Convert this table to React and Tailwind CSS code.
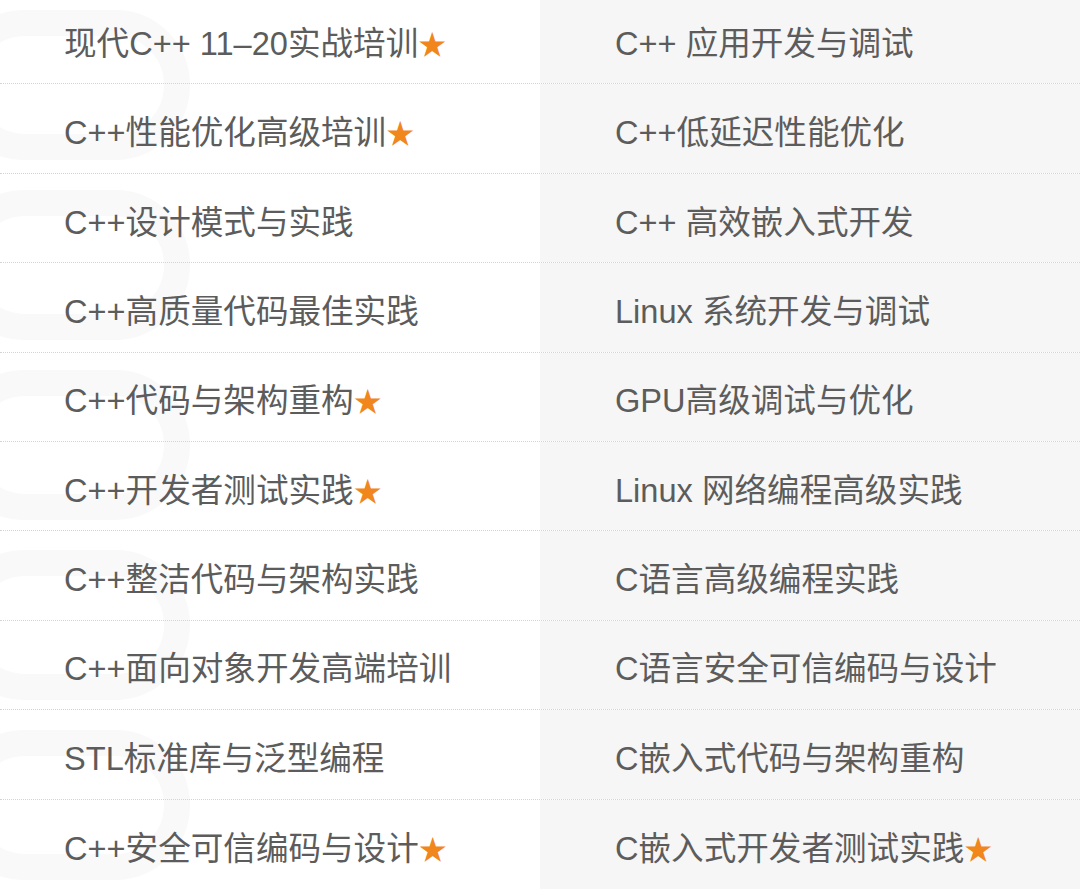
import React from 'react';

const rows = [
  ['现代C++ 11–20实战培训', true, 'C++ 应用开发与调试', false],
  ['C++性能优化高级培训', true, 'C++低延迟性能优化', false],
  ['C++设计模式与实践', false, 'C++ 高效嵌入式开发', false],
  ['C++高质量代码最佳实践', false, 'Linux 系统开发与调试', false],
  ['C++代码与架构重构', true, 'GPU高级调试与优化', false],
  ['C++开发者测试实践', true, 'Linux 网络编程高级实践', false],
  ['C++整洁代码与架构实践', false, 'C语言高级编程实践', false],
  ['C++面向对象开发高端培训', false, 'C语言安全可信编码与设计', false],
  ['STL标准库与泛型编程', false, 'C嵌入式代码与架构重构', false],
  ['C++安全可信编码与设计', true, 'C嵌入式开发者测试实践', true],
];

function Course({ title, star }) {
  return (
    <span>
      {title}
      {star && <span className="text-[#f0861c] text-[28px]">★</span>}
    </span>
  );
}

export default function App() {
  return (
    <div
      className="relative w-[1080px] h-[893px] overflow-hidden bg-white text-[#5c5c5c] text-[32.6px]"
      style={{ fontFamily: '"Liberation Sans", "Noto Sans CJK SC", sans-serif' }}
    >
      {/* faint watermark rings behind the left column */}
      <div className="absolute inset-y-0 -left-[50px] w-[240px] flex flex-col gap-[30px] py-[10px] pointer-events-none">
        {[0, 1, 2, 3, 4].map((k) => (
          <div key={k} className="h-[150px] rounded-full border-[26px] border-[#f9f9f9]" />
        ))}
      </div>

      <div className="relative -mt-[5px] flex flex-col">
        {rows.map(([l, ls, r, rs], i) => (
          <div
            key={i}
            className={`grid grid-cols-2 h-[89.4px] ${
              i < rows.length - 1 ? 'border-b border-dotted border-[#d4d4d4]' : ''
            }`}
          >
            <div className="flex items-center pl-[64px] pt-[10px] whitespace-nowrap">
              <Course title={l} star={ls} />
            </div>
            <div className="flex items-center pl-[75px] pt-[10px] bg-[#f6f6f6] whitespace-nowrap">
              <Course title={r} star={rs} />
            </div>
          </div>
        ))}
      </div>
    </div>
  );
}
